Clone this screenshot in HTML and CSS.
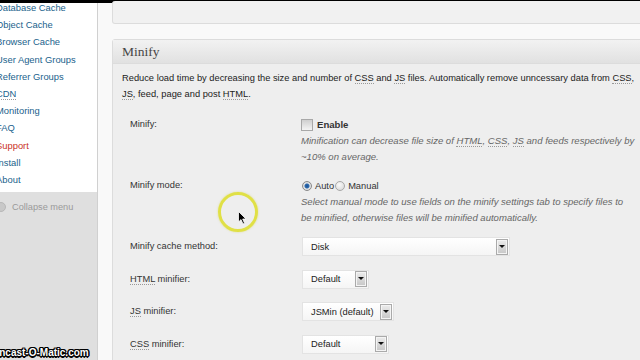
FILE: index.html
```html
<!DOCTYPE html>
<html lang="en">
<head>
  <meta charset="UTF-8" />
  <title>Performance - Minify</title>
  <link rel="stylesheet" href="styles.css">
</head>
<body>

  <div class="topbar"></div>

  <div class="layout">
    <!-- Admin menu -->
    <nav class="sidebar">
      <ul class="menu">
        <li><a href="#">Database Cache</a></li>
        <li><a href="#">Object Cache</a></li>
        <li><a href="#">Browser Cache</a></li>
        <li><a href="#">User Agent Groups</a></li>
        <li><a href="#">Referrer Groups</a></li>
        <li><a href="#"><abbr>CDN</abbr></a></li>
        <li><a href="#">Monitoring</a></li>
        <li><a href="#">FAQ</a></li>
        <li><a href="#" class="support">Support</a></li>
        <li><a href="#">Install</a></li>
        <li><a href="#">About</a></li>
      </ul>
      <div class="collapse"><span class="collapse-icon"></span>Collapse menu</div>
    </nav>

    <!-- Settings -->
    <main class="content">
      <div class="panel panel-prev"></div>

      <section class="panel">
        <h3 class="panel-title">Minify <span class="toggle">&#9662;</span></h3>
        <div class="panel-body">
          <p class="intro">Reduce load time by decreasing the size and number of <abbr>CSS</abbr> and <abbr>JS</abbr> files. Automatically remove unncessary data from <abbr>CSS</abbr>, <abbr>JS</abbr>, feed, page and post <abbr>HTML</abbr>.</p>

          <div class="form-table">
            <div class="row">
              <div class="label">Minify:</div>
              <div class="field">
                <div class="line"><span class="checkbox"></span><b>Enable</b></div>
                <p class="desc">Minification can decrease file size of <abbr>HTML</abbr>, <abbr>CSS</abbr>, <abbr>JS</abbr> and feeds respectively by ~10% on average.</p>
              </div>
            </div>

            <div class="row">
              <div class="label">Minify mode:</div>
              <div class="field">
                <div class="line"><span class="radio checked"></span>Auto <span class="radio"></span>Manual</div>
                <p class="desc">Select manual mode to use fields on the minify settings tab to specify files to<br>be minified, otherwise files will be minified automatically.</p>
              </div>
            </div>

            <div class="row row-select">
              <div class="label">Minify cache method:</div>
              <div class="field"><div class="select select-method"><span>Disk</span><span class="arrow"></span></div></div>
            </div>

            <div class="row row-select">
              <div class="label"><abbr>HTML</abbr> minifier:</div>
              <div class="field"><div class="select select-html"><span>Default</span><span class="arrow"></span></div></div>
            </div>

            <div class="row row-select">
              <div class="label"><abbr>JS</abbr> minifier:</div>
              <div class="field"><div class="select select-js"><span>JSMin (default)</span><span class="arrow"></span></div></div>
            </div>

            <div class="row row-select">
              <div class="label"><abbr>CSS</abbr> minifier:</div>
              <div class="field"><div class="select select-css"><span>Default</span><span class="arrow"></span></div></div>
            </div>
          </div>
        </div>
      </section>
    </main>
  </div>

  <!-- recording overlays -->
  <div class="click-ring"></div>
  <svg class="pointer" width="9" height="14" viewBox="0 0 9 14">
    <path d="M0.5 0.5 L0.5 11 L3 8.6 L5 13 L6.6 12.3 L4.7 8 L8 8 Z" fill="#000" stroke="#fff" stroke-width="0.8"/>
  </svg>
  <div class="watermark">Screencast-O-Matic.com</div>

</body>
</html>
```

FILE: styles.css
```css
body {
  margin: 0;
  width: 640px;
  height: 360px;
  overflow: hidden;
  font-family: "Liberation Sans", Arial, sans-serif;
  font-size: 9.3px;
  color: #333;
  background: #f9f9f9;
  position: relative;
}

abbr {
  text-decoration: none;
  border-bottom: 1px dotted #999;
}

.topbar {
  height: 3px;
  background: #000;
}

.layout {
  display: flex;
  height: 357px;
}

/* sidebar */
.sidebar {
  width: 97px;
  flex-shrink: 0;
  background: #dfdfdf;
  border-right: 1px solid #d0d0d0;
  overflow: hidden;
}

.menu {
  list-style: none;
  margin: -4px 0 0;
  padding: 0 0 4px;
  background: #fff;
}

.menu li {
  line-height: 17.2px;
  white-space: nowrap;
}

.menu a {
  display: block;
  margin-left: -4px;
  color: #21628c;
  text-decoration: none;
  font-size: 9.4px;
}

.menu a.support {
  color: #c9311f;
}

.collapse {
  display: flex;
  align-items: center;
  gap: 6px;
  margin-top: 10px;
  margin-left: -4px;
  color: #9a9a9a;
  font-size: 9.2px;
}

.collapse-icon {
  width: 8px;
  height: 8px;
  border-radius: 50%;
  background: #c8c8c8;
  border: 1px solid #b8b8b8;
}

/* content */
.content {
  flex: 1;
  padding-left: 14px;
  margin-right: -8px;
}

.panel {
  border: 1px solid #dcdcdc;
  border-radius: 3px;
  background: #eeeeee;
}

.panel-prev {
  height: 22px;
  margin-top: -2px;
  border-top: none;
  background: #f1f1f1;
}

.panel + .panel {
  margin-top: 15px;
}

.panel-title {
  position: relative;
  margin: 0;
  height: 23px;
  line-height: 23px;
  padding-left: 9px;
  font-family: "Liberation Serif", Georgia, serif;
  font-weight: normal;
  font-size: 13.5px;
  color: #464646;
  background: linear-gradient(#f2f2f2, #e1e1e1);
  border-bottom: 1px solid #dcdcdc;
}

.toggle {
  position: absolute;
  right: 3px;
  top: 0;
  font-size: 7px;
  color: #999;
}

.panel-body {
  padding: 6px 11px 20px 9px;
}

.intro {
  margin: 0 0 8px;
  line-height: 16px;
  color: #222;
}

.form-table .row {
  display: grid;
  grid-template-columns: 171px 1fr;
  padding: 6px 0 6px 8px;
}

.form-table .row-select {
  padding: 5px 0 8.5px 8px;
  align-items: center;
}

.label {
  line-height: 17px;
  color: #333;
}

.row-select .label {
  line-height: 19px;
}

.line {
  display: flex;
  align-items: center;
  height: 17px;
  color: #333;
}

.line b {
  font-size: 9.6px;
}

.checkbox {
  width: 10px;
  height: 10px;
  margin-right: 4px;
  border: 1px solid #a8a8a8;
  background: linear-gradient(#cfcfcf, #f4f4f4);
}

.radio {
  width: 10px;
  height: 10px;
  margin-right: 3px;
  border-radius: 50%;
  border: 1px solid #a8a8a8;
  background: radial-gradient(circle at 40% 35%, #fafafa, #d4d4d4);
  box-sizing: border-box;
  margin-left: 1px;
}

.radio.checked {
  background: radial-gradient(circle, #1c4f8f 0, #2d6bb0 2px, #e6e6e6 3px, #cfcfcf 5px);
  border-color: #8a8a8a;
}

.desc {
  margin: 0;
  line-height: 16px;
  font-style: italic;
  font-size: 9.55px;
  color: #666;
}

.select {
  display: flex;
  align-items: center;
  justify-content: space-between;
  height: 19px;
  box-sizing: border-box;
  padding: 0 1px 0 8px;
  margin-left: 1px;
  border: 1px solid #e3e3e3;
  background: linear-gradient(#ffffff, #f5f5f5);
  color: #222;
}

.select-method { width: 208px; }
.select-html { width: 67px; }
.select-js { width: 92px; }
.select-css { width: 87px; }

.arrow {
  position: relative;
  width: 10px;
  height: 14px;
  border: 1px solid #aaa;
  background: linear-gradient(#ececec, #c6c6c6);
  box-shadow: inset 0 0 0 1px #f4f4f4;
}

.arrow::after {
  content: "";
  position: absolute;
  left: 2px;
  top: 5px;
  border-left: 3px solid transparent;
  border-right: 3px solid transparent;
  border-top: 3px solid #111;
}

/* overlays */
.click-ring {
  position: absolute;
  left: 218px;
  top: 192px;
  width: 34px;
  height: 34px;
  border-radius: 50%;
  border: 3px solid #e0e046;
  box-shadow: 0 0 2px rgba(210, 210, 60, 0.6);
}

.pointer {
  position: absolute;
  left: 238px;
  top: 211px;
}

.watermark {
  position: absolute;
  left: -28px;
  bottom: 2px;
  font-weight: bold;
  font-size: 10px;
  color: #fff;
  text-shadow: -1px -1px 0 #000, 1px -1px 0 #000, -1px 1px 0 #000, 1px 1px 0 #000,
               0 -1.5px 0 #000, 0 1.5px 0 #000, -1.5px 0 0 #000, 1.5px 0 0 #000;
}
```
